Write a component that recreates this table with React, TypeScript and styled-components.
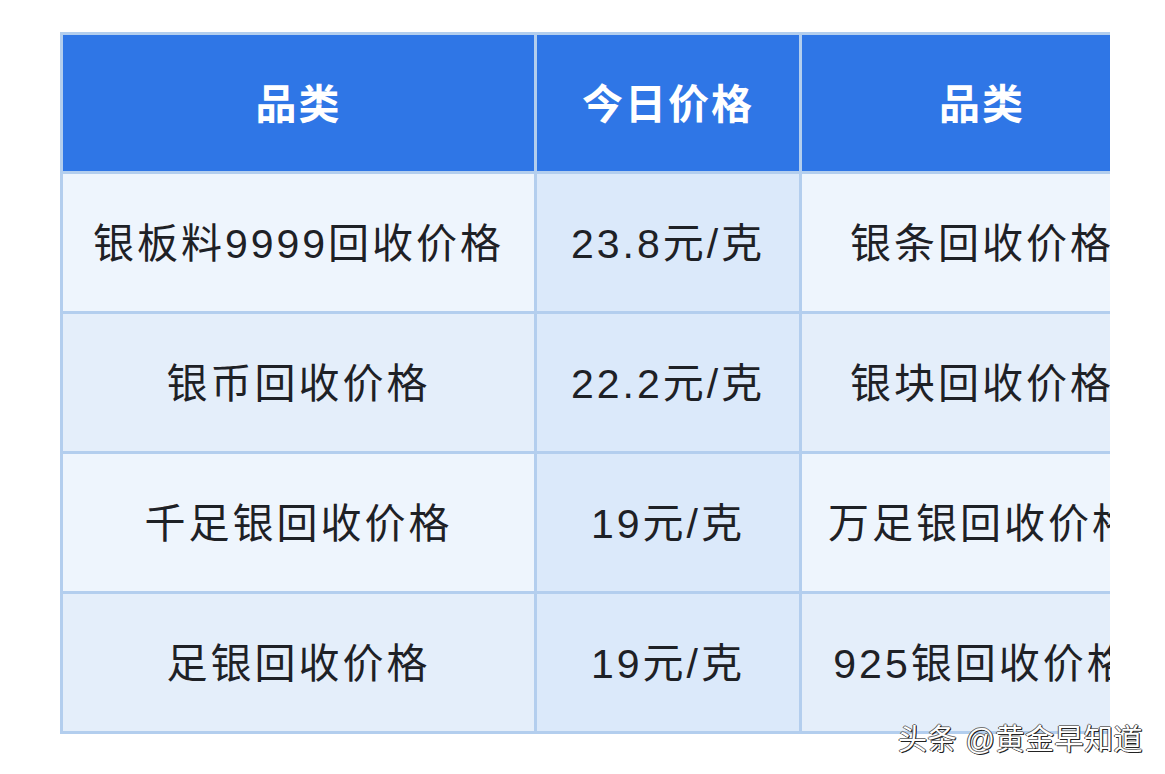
import styled, { createGlobalStyle } from "styled-components";

const GlobalStyle = createGlobalStyle`
  html, body {
    margin: 0;
    padding: 0;
    background: #ffffff;
  }
  body {
    font-family: "Liberation Sans", "Noto Sans CJK SC", sans-serif;
  }
`;

const Page = styled.div`
  position: relative;
  width: 1165px;
  height: 774px;
  padding: 32px 0 0 60px;
  box-sizing: border-box;
  overflow: hidden;
`;

const Clip = styled.div`
  width: 1050px;
  overflow: hidden;
`;

const Table = styled.div`
  display: grid;
  grid-template-columns: 471px 262px 360px;
  grid-auto-rows: 137px;
  grid-template-rows: 136px;
  gap: 3px;
  padding: 3px;
  width: max-content;
  background: #b3ceee;
`;

const HeadCell = styled.div`
  display: flex;
  align-items: center;
  justify-content: center;
  padding-bottom: 4px;
  background: #2f76e6;
  color: #ffffff;
  font-size: 41px;
  font-weight: 700;
  letter-spacing: 2px;
`;

const Cell = styled.div<{ $even: boolean; $price?: boolean }>`
  display: flex;
  align-items: center;
  justify-content: center;
  padding-bottom: 5px;
  background: ${(p) =>
    p.$price ? "#dbe9fa" : p.$even ? "#e4eefa" : "#eef5fd"};
  color: #1e2126;
  font-size: 41px;
  letter-spacing: 3px;
  white-space: nowrap;
`;

const Watermark = styled.div`
  position: absolute;
  left: 898px;
  top: 716px;
  font-size: 29px;
  color: #ffffff;
  letter-spacing: 0.5px;
  text-shadow: 1px 1px 0 #222, -1px 0 0 #555, 0 -1px 0 #777, 1px 0 0 #444;
`;

const rows = [
  ["银板料9999回收价格", "23.8元/克", "银条回收价格"],
  ["银币回收价格", "22.2元/克", "银块回收价格"],
  ["千足银回收价格", "19元/克", "万足银回收价格"],
  ["足银回收价格", "19元/克", "925银回收价格"],
];

function App() {
  return (
    <>
      <GlobalStyle />
      <Page>
        <Clip>
          <Table>
            <HeadCell>品类</HeadCell>
            <HeadCell>今日价格</HeadCell>
            <HeadCell>品类</HeadCell>
            {rows.map((row, idx) => (
              <>
                <Cell key={`a${idx}`} $even={idx % 2 === 1}>
                  {row[0]}
                </Cell>
                <Cell key={`b${idx}`} $even={idx % 2 === 1} $price>
                  {row[1]}
                </Cell>
                <Cell key={`c${idx}`} $even={idx % 2 === 1}>
                  {row[2]}
                </Cell>
              </>
            ))}
          </Table>
        </Clip>
        <Watermark>头条 @黄金早知道</Watermark>
      </Page>
    </>
  );
}

export default App;
